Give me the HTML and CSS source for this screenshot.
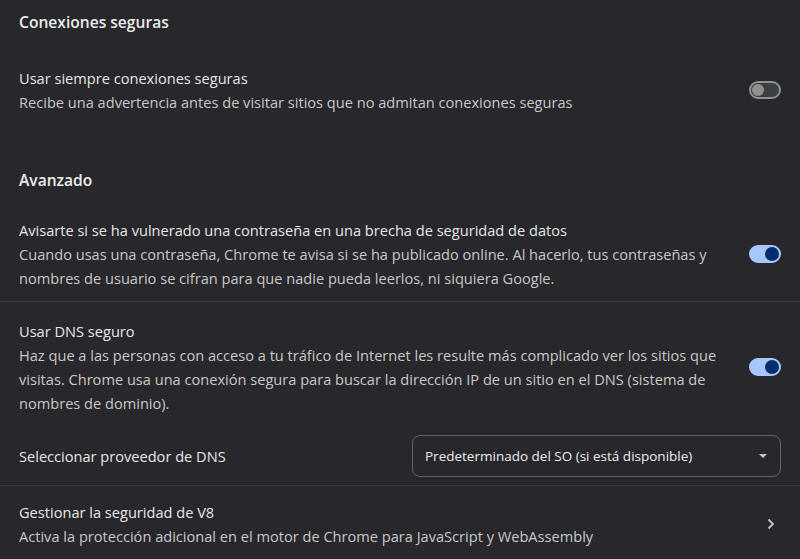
FILE: index.html
```html
<!DOCTYPE html>
<html lang="es">
<head>
<meta charset="utf-8">
<link rel="stylesheet" href="styles.css">
</head>
<body>
<main class="page">
  <h2 class="section-title">Conexiones seguras</h2>
  <div class="row row-first">
    <div class="text">
      <div class="label">Usar siempre conexiones seguras</div>
      <div class="sub">Recibe una advertencia antes de visitar sitios que no admitan conexiones seguras</div>
    </div>
    <span class="toggle"><span class="knob"></span></span>
  </div>

  <h2 class="section-title adv">Avanzado</h2>
  <div class="row row-leak">
    <div class="text">
      <div class="label">Avisarte si se ha vulnerado una contraseña en una brecha de seguridad de datos</div>
      <div class="sub">Cuando usas una contraseña, Chrome te avisa si se ha publicado online. Al hacerlo, tus contraseñas y<br>nombres de usuario se cifran para que nadie pueda leerlos, ni siquiera Google.</div>
    </div>
    <span class="toggle on"><span class="knob"></span></span>
  </div>
  <div class="sep"></div>
  <div class="row row-dns">
    <div class="text">
      <div class="label">Usar DNS seguro</div>
      <div class="sub">Haz que a las personas con acceso a tu tráfico de Internet les resulte más complicado ver los sitios que<br>visitas. Chrome usa una conexión segura para buscar la dirección IP de un sitio en el DNS (sistema de<br>nombres de dominio).</div>
    </div>
    <span class="toggle on"><span class="knob"></span></span>
  </div>
  <div class="row row-select">
    <div class="label">Seleccionar proveedor de DNS</div>
    <div class="select">
      <span>Predeterminado del SO (si está disponible)</span>
      <span class="caret"></span>
    </div>
  </div>
  <div class="row row-v8">
    <div class="text">
      <div class="label">Gestionar la seguridad de V8</div>
      <div class="sub">Activa la protección adicional en el motor de Chrome para JavaScript y WebAssembly</div>
    </div>
    <svg class="chev" width="20" height="20" viewBox="0 0 20 20"><path d="M7.5 5.5 L12 10 L7.5 14.5" fill="none" stroke="#c4c7c5" stroke-width="1.8"/></svg>
  </div>
</main>
</body>
</html>
```

FILE: styles.css
```css
* { box-sizing: border-box; }
html, body { margin: 0; background: #28282c; }
body {
  font-family: "Open Sans", "Noto Sans", sans-serif;
  font-size: 14.6px;
  color: #e3e3e3;
}
.page {
  width: 800px;
  height: 559px;
  overflow: hidden;
  padding: 10px 19px 0 19px;
}
.section-title {
  margin: 0;
  font-size: 15.6px;
  font-weight: 600;
  line-height: 24px;
  color: #ececec;
}
.adv { margin-top: 54px; }
.row {
  display: flex;
  align-items: center;
  justify-content: space-between;
}
.row-first { margin-top: 32px; }
.row-leak { margin-top: 26px; padding-bottom: 7px; }
.label { line-height: 24px; color: #e6e6e6; }
.sub { line-height: 24px; color: #c7c7c7; white-space: nowrap; }
.sep {
  height: 5px;
  margin: 0 -19px;
  border-top: 1px solid #1d1d20;
  border-bottom: 1px solid #3a3a3e;
}
.row-dns { padding-top: 17px; }
.row-select {
  padding-top: 20px;
  padding-bottom: 8px;
  border-bottom: 1px solid #3a3a3e;
  margin: 0 -19px;
  padding-left: 19px;
  padding-right: 19px;
}
.row-v8 { padding-top: 14px; }
.toggle {
  position: relative;
  flex: none;
  width: 32px;
  height: 18px;
  border-radius: 9px;
  border: 2px solid #8e918f;
  background: #3c4043;
}
.toggle .knob {
  position: absolute;
  left: 1px;
  top: 1px;
  width: 12px;
  height: 12px;
  border-radius: 50%;
  background: #8e918f;
}
.toggle.on {
  border-color: #a8c7fa;
  background: #a8c7fa;
}
.toggle.on .knob {
  left: auto;
  right: 0px;
  top: 0px;
  width: 14px;
  height: 14px;
  background: #062e6f;
}
.select {
  width: 369px;
  height: 42px;
  border: 1px solid #5f6368;
  border-radius: 8px;
  display: flex;
  align-items: center;
  justify-content: space-between;
  padding: 0 13px 0 12px;
  color: #ececec;
  font-size: 13.5px;
}
.caret {
  width: 0; height: 0;
  border-left: 4px solid transparent;
  border-right: 4px solid transparent;
  border-top: 4px solid #c4c7c5;
}
.chev { flex: none; margin-right: 0; }
```
